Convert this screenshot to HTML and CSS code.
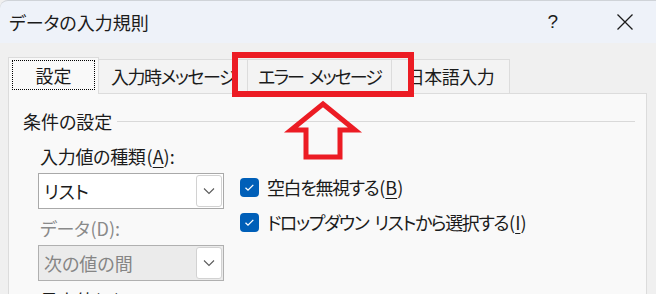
FILE: index.html
```html
<!DOCTYPE html>
<html lang="ja">
<head>
    <meta charset="UTF-8">
    <meta name="viewport" content="width=device-width, initial-scale=1.0">
    <title>データの入力規則</title>
    <link rel="stylesheet" href="styles.css">
</head>
<body>
    <div class="dialog">
        <div class="titlebar">
            <span class="title">データの入力規則</span>
            <span class="help">?</span>
            <svg class="close" width="18" height="18" viewBox="0 0 18 18">
                <path d="M1.5 1.5 L16.5 16.5 M16.5 1.5 L1.5 16.5" stroke="#1b1b1b" stroke-width="1.3" fill="none"/>
            </svg>
        </div>

        <div class="content">
            <div class="tabs">
                <div class="tab active"><span class="focus">設定</span></div>
                <div class="tab tab-2">入力時メッセージ</div>
                <div class="tab tab-3">エラー<span class="gap"></span>メッセージ</div>
                <div class="tab tab-4">日本語入力</div>
            </div>

            <div class="pane">
                <div class="group-head">
                    <span>条件の設定</span>
                    <div class="rule"></div>
                </div>

                <div class="settings">
                    <div class="left">
                        <div class="label">入力値の種類<span class="lat">(<u>A</u>):</span></div>
                        <div class="combo">
                            <span class="value">リスト</span>
                            <span class="drop">
                                <svg width="12" height="8" viewBox="0 0 12 8"><path d="M1 1.5 L6 6.5 L11 1.5" stroke="#5a5a5a" stroke-width="1.1" fill="none"/></svg>
                            </span>
                        </div>
                        <div class="label disabled">データ<span class="lat">(D):</span></div>
                        <div class="combo off">
                            <span class="value">次の値の間</span>
                            <span class="drop">
                                <svg width="12" height="8" viewBox="0 0 12 8"><path d="M1 1.5 L6 6.5 L11 1.5" stroke="#5a5a5a" stroke-width="1.1" fill="none"/></svg>
                            </span>
                        </div>
                        <div class="label">最小値<span class="lat">(<u>M</u>):</span></div>
                    </div>

                    <div class="right">
                        <div class="check">
                            <span class="box"><svg width="19" height="19" viewBox="0 0 19 19"><path d="M5.5 9.8 L8 12.2 L13.3 6.9" stroke="#fff" stroke-width="1.3" fill="none"/></svg></span>
                            <span>空白を無視する<span class="lat">(<u>B</u>)</span></span>
                        </div>
                        <div class="check">
                            <span class="box"><svg width="19" height="19" viewBox="0 0 19 19"><path d="M5.5 9.8 L8 12.2 L13.3 6.9" stroke="#fff" stroke-width="1.3" fill="none"/></svg></span>
                            <span>ドロップダウン<span class="gap"></span>リストから選択する<span class="lat">(<u>I</u>)</span></span>
                        </div>
                    </div>
                </div>
            </div>
        </div>

        <!-- annotation drawn over the screenshot -->
        <div class="mark-box"></div>
        <svg class="mark-arrow" width="90" height="70" viewBox="280 95 90 70">
            <polygon points="323,104 355,130 340,130 340,157 306,157 306,130 291,130" fill="none" stroke="#ec1c24" stroke-width="5"/>
        </svg>
    </div>
</body>
</html>
```

FILE: styles.css
```css
body {
    margin: 0;
    background: #f0f0f0;
    font-family: "Noto Sans CJK JP", "Noto Sans", sans-serif;
    font-feature-settings: "palt";
    font-size: 18px;
    color: #1b1b1b;
    overflow: hidden;
}
u {
    text-decoration-thickness: 1px;
    text-underline-offset: 3px;
}
.lat {
    letter-spacing: 0;
    padding-left: 1px;
}
.gap {
    display: inline-block;
    width: 6px;
}
.dialog {
    position: relative;
    width: 656px;
    height: 294px;
}
.titlebar {
    height: 43px;
    box-sizing: border-box;
    background: #eef2f9;
    border-top: 1px solid #cfd3d8;
    border-top-left-radius: 8px;
    display: flex;
    align-items: center;
    padding-left: 9px;
}
.title {
    flex: 1;
    line-height: 24px;
}
.help {
    font-family: "Liberation Sans", sans-serif;
    font-size: 19px;
    margin-right: 58px;
}
.close {
    margin-right: 22px;
}
.content {
    padding: 14px 9px 0 8px;
}
.tabs {
    display: flex;
    align-items: flex-end;
    height: 36px;
}
.tab {
    box-sizing: border-box;
    height: 34px;
    border: 1px solid #dcdcdc;
    border-bottom: none;
    border-left: none;
    background: #f3f3f3;
    display: flex;
    align-items: center;
    justify-content: center;
    padding-bottom: 2px;
    white-space: nowrap;
    letter-spacing: -1.5px;
}
.tab.active {
    position: relative;
    z-index: 1;
    width: 91px;
    height: 37px;
    margin-bottom: -1px;
    border-left: 1px solid #dcdcdc;
    background: #f9f9f9;
    padding: 2px 3px 4px;
    letter-spacing: 0;
}
.focus {
    flex: 1;
    align-self: stretch;
    border: 1px dotted #000;
    display: flex;
    align-items: center;
    justify-content: center;
}
.tab-2 { width: 149px; }
.tab-3 { width: 144px; letter-spacing: -2px; }
.tab-4 { width: 118px; letter-spacing: -0.5px; }
.pane {
    box-sizing: border-box;
    height: 260px;
    border: 1px solid #dcdcdc;
    background: #f9f9f9;
    padding: 15px 11px 0 14px;
}
.group-head {
    display: flex;
    align-items: center;
    gap: 5px;
    line-height: 24px;
}
.rule {
    flex: 1;
    height: 1px;
    background: #d9d9d9;
}
.settings {
    display: flex;
    gap: 16px;
    margin-top: 11px;
    padding-left: 15px;
}
.left {
    width: 186px;
}
.label {
    line-height: 24px;
    padding-left: 2px;
    white-space: nowrap;
    letter-spacing: -0.3px;
}
.label.disabled {
    color: #8a8a8a;
    margin-top: 7px;
}
.combo {
    box-sizing: border-box;
    height: 36px;
    margin-top: 5px;
    border: 1px solid #a9a9a9;
    background: #fff;
    display: flex;
    align-items: center;
    padding: 1px;
}
.combo.off {
    background: #ebebeb;
    border-color: #b0b0b0;
}
.combo.off .value {
    color: #858585;
}
.combo + .label {
    margin-top: 7px;
}
.value {
    flex: 1;
    padding-left: 4px;
    line-height: 24px;
}
.drop {
    box-sizing: border-box;
    width: 26px;
    height: 32px;
    background: #fff;
    border: 1px solid #d2d2d2;
    border-radius: 3px;
    display: flex;
    align-items: center;
    justify-content: center;
}
.right {
    padding-top: 31px;
    display: flex;
    flex-direction: column;
    gap: 11px;
}
.check {
    display: flex;
    align-items: center;
    gap: 8px;
    line-height: 24px;
    white-space: nowrap;
    letter-spacing: -1.4px;
}
.box {
    width: 19px;
    height: 19px;
    background: #005fb8;
    border-radius: 4px;
    display: flex;
}
.mark-box {
    position: absolute;
    left: 232px;
    top: 52px;
    width: 182px;
    height: 45px;
    box-sizing: border-box;
    border: 6px solid #ec1c24;
    z-index: 2;
}
.mark-arrow {
    position: absolute;
    left: 280px;
    top: 95px;
    z-index: 2;
}
```
